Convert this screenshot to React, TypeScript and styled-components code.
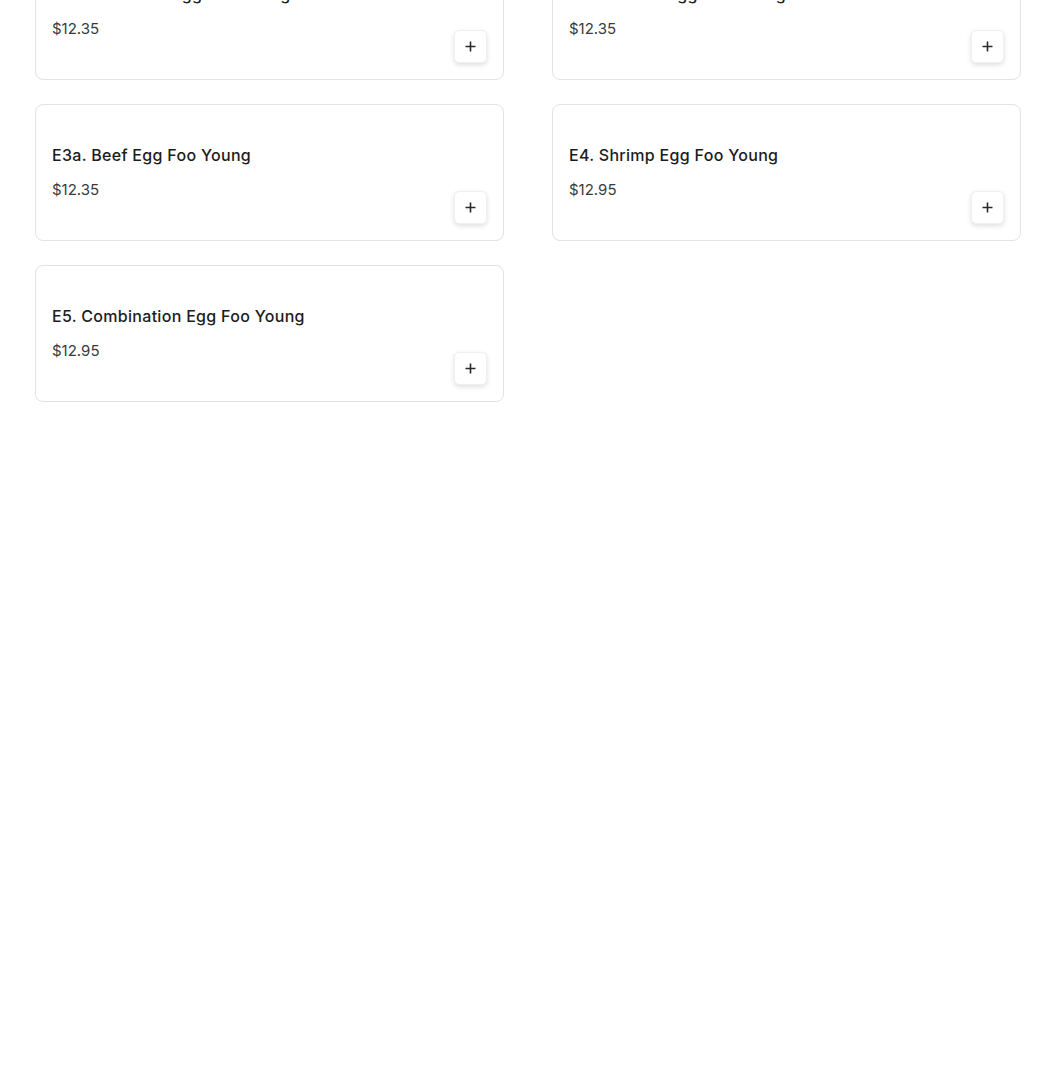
import React from "react";
import styled, { createGlobalStyle } from "styled-components";

const GlobalStyle = createGlobalStyle`
  html, body {
    margin: 0;
    padding: 0;
    background: #ffffff;
    overflow: hidden;
  }
  body {
    font-family: Inter, "Noto Sans", Arial, sans-serif;
    color: #1f1f1f;
  }
`;

const Page = styled.main`
  height: 1086px;
  overflow: hidden;
`;

// the list is scrolled a little, so the first row sits partly above the fold
const MenuGrid = styled.section`
  display: grid;
  grid-template-columns: 469px 469px;
  column-gap: 48px;
  row-gap: 24px;
  margin: -57px 0 0 35px;
`;

const Card = styled.article`
  box-sizing: border-box;
  height: 137px;
  display: flex;
  align-items: flex-end;
  justify-content: space-between;
  padding: 16px;
  border: 1px solid #e3e3e3;
  border-radius: 8px;
  background: #fff;
`;

const Info = styled.div`
  display: flex;
  flex-direction: column;
  align-self: stretch;
  padding-top: 22px;
`;

const Title = styled.h3`
  margin: 0;
  font-size: 16px;
  line-height: 24px;
  font-weight: 500;
  letter-spacing: 0.3px;
  color: #1c1c1c;
`;

const Price = styled.span`
  margin-top: 12px;
  font-size: 15px;
  line-height: 22px;
  font-weight: 400;
  color: #3a3a3a;
`;

const AddButton = styled.button`
  width: 33px;
  height: 33px;
  display: flex;
  align-items: center;
  justify-content: center;
  padding: 0;
  border: 1px solid #f0f0f0;
  border-radius: 5px;
  background: #fff;
  box-shadow: 0 2px 5px rgba(0, 0, 0, 0.13);
  cursor: pointer;
`;

const PlusIcon = () => (
  <svg width="11" height="11" viewBox="0 0 11 11" fill="none">
    <path d="M5.5 0.5v10M0.5 5.5h10" stroke="#2a2a2a" strokeWidth="1.6" />
  </svg>
);

interface Dish {
  name: string;
  price: string;
}

const dishes: Dish[] = [
  { name: "E2. Roast Pork Egg Foo Young", price: "$12.35" },
  { name: "E3. Chicken Egg Foo Young", price: "$12.35" },
  { name: "E3a. Beef Egg Foo Young", price: "$12.35" },
  { name: "E4. Shrimp Egg Foo Young", price: "$12.95" },
  { name: "E5. Combination Egg Foo Young", price: "$12.95" },
];

const App: React.FC = () => {
  return (
    <Page>
      <GlobalStyle />
      <MenuGrid>
        {dishes.map(dish => (
          <Card key={dish.name}>
            <Info>
              <Title>{dish.name}</Title>
              <Price>{dish.price}</Price>
            </Info>
            <AddButton aria-label={`Add ${dish.name}`}>
              <PlusIcon />
            </AddButton>
          </Card>
        ))}
      </MenuGrid>
    </Page>
  );
};

export default App;
